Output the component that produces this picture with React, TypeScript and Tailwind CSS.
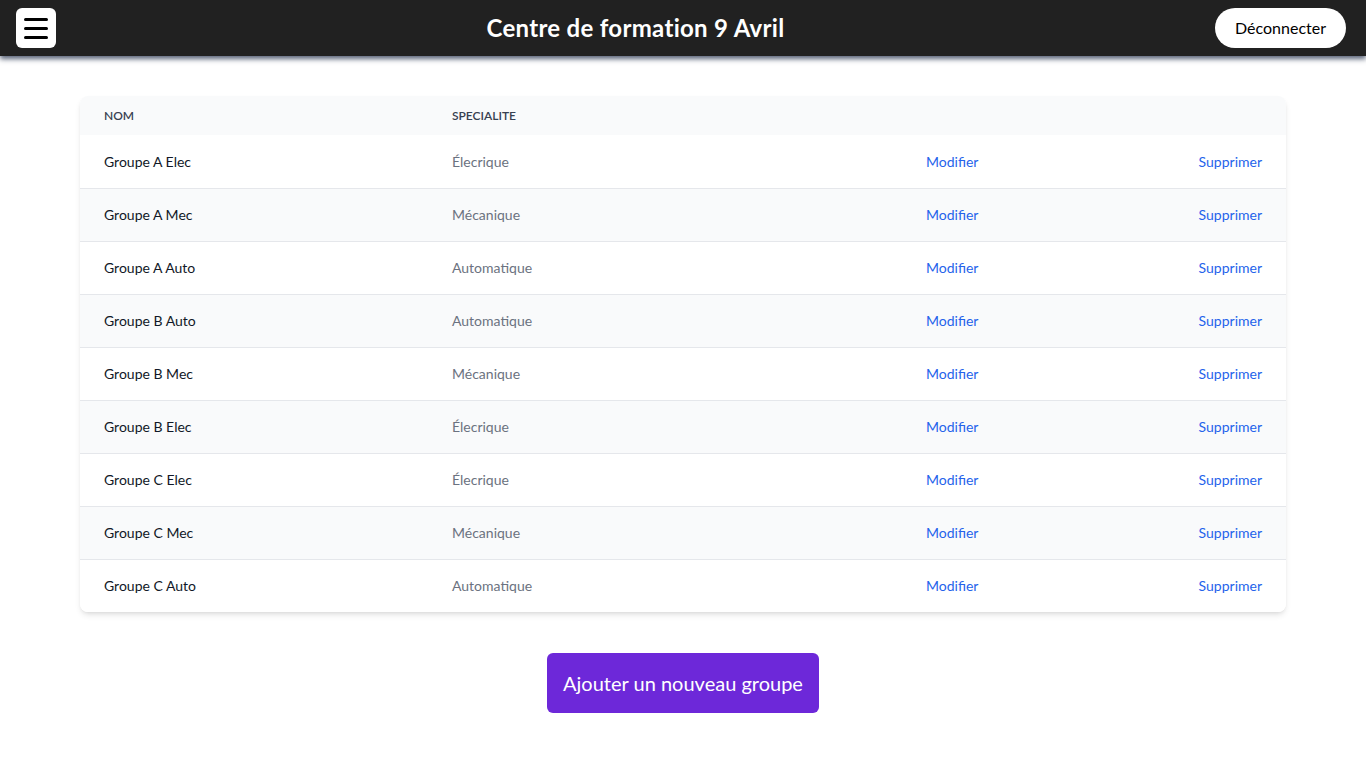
import { useState } from "react";

const groupes = [
    { nom: "Groupe A Elec", specialite: "Élecrique" },
    { nom: "Groupe A Mec", specialite: "Mécanique" },
    { nom: "Groupe A Auto", specialite: "Automatique" },
    { nom: "Groupe B Auto", specialite: "Automatique" },
    { nom: "Groupe B Mec", specialite: "Mécanique" },
    { nom: "Groupe B Elec", specialite: "Élecrique" },
    { nom: "Groupe C Elec", specialite: "Élecrique" },
    { nom: "Groupe C Mec", specialite: "Mécanique" },
    { nom: "Groupe C Auto", specialite: "Automatique" },
];

function MyHeader() {
    return (
        <div className="h-14 bg-[#212121] flex items-center justify-between pl-4 pr-5 shadow-[0_3px_5px_rgba(60,72,96,0.85)] relative z-10">
            <button className="w-10 h-10 bg-white rounded-md flex flex-col justify-center items-center gap-[6px]">
                <span className="block w-6 h-[3px] bg-black rounded-sm" />
                <span className="block w-6 h-[3px] bg-black rounded-sm" />
                <span className="block w-6 h-[3px] bg-black rounded-sm" />
            </button>
            <p className="text-white font-bold text-2xl tracking-[0.3px]">Centre de formation 9 Avril</p>
            <button className="h-10 px-5 bg-white rounded-full text-base text-black">Déconnecter</button>
        </div>
    );
}

export default function App() {
    const [list] = useState(groupes);

    return (
        <div className="min-h-screen bg-white" style={{ fontFamily: "Lato, 'Noto Sans', sans-serif" }}>
            <MyHeader />
            <div className="px-20 pt-10">
                <div className="rounded-lg shadow-md overflow-hidden">
                    <table className="w-full table-fixed text-sm">
                        <colgroup>
                            <col className="w-[348px]" />
                            <col className="w-[474px]" />
                            <col className="w-[200px]" />
                            <col />
                        </colgroup>
                        <thead className="bg-[#f9fafb]">
                            <tr className="h-[39px]">
                                <th className="px-6 text-left text-xs font-semibold text-[#374151] uppercase">Nom</th>
                                <th className="px-6 text-left text-xs font-semibold text-[#374151] uppercase">Specialite</th>
                                <th className="px-6"></th>
                                <th className="px-6"></th>
                            </tr>
                        </thead>
                        <tbody>
                            {list.map((g, i) => (
                                <tr key={g.nom} className={`h-[53px] ${i % 2 === 1 ? "bg-[#f9fafb]" : "bg-white"} ${i > 0 ? "border-t border-[#e5e7eb]" : ""}`}>
                                    <td className="px-6 pt-[1px] text-[#111827]">{g.nom}</td>
                                    <td className="px-6 pt-[1px] text-[#6b7280]">{g.specialite}</td>
                                    <td className="px-6 pt-[1px] text-[#2563eb]">Modifier</td>
                                    <td className="px-6 pt-[1px] text-right text-[#2563eb]">Supprimer</td>
                                </tr>
                            ))}
                        </tbody>
                    </table>
                </div>
                <div className="flex justify-center mt-[41px]">
                    <button className="h-[60px] px-4 bg-[#6d28d9] rounded-md text-white text-xl">Ajouter un nouveau groupe</button>
                </div>
            </div>
        </div>
    );
}
